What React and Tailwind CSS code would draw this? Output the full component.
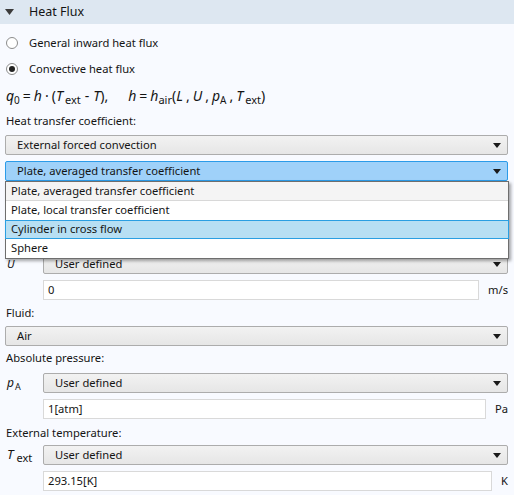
import React from "react";

const font = { fontFamily: '"Noto Sans", "Open Sans", sans-serif' };

function Arrow() {
	return (
		<svg width="8" height="5" viewBox="0 0 8 5" className="shrink-0">
			<path d="M0 0 H8 L4 5 Z" fill="#1a1a1a" />
		</svg>
	);
}

function Select({ value, active = false, className = "" }) {
	return (
		<div
			className={`h-[20px] flex items-center justify-between pl-[11px] pr-[6px] rounded-[2px] border ${
				active
					? "bg-[#9fd1f9] border-[#2b9be8]"
					: "bg-gradient-to-b from-[#f2f2f2] to-[#e6e6e6] border-[#acacac]"
			} ${className}`}
		>
			<span className="leading-none">{value}</span>
			<Arrow />
		</div>
	);
}

function Input({ value, unit, className = "" }) {
	return (
		<div className={`flex items-center gap-[9px] pl-[43px] ${className}`}>
			<div className="flex-1 h-[20px] bg-white border border-[#d9d9d9] flex items-center px-[4px]">
				{value}
			</div>
			<span>{unit}</span>
		</div>
	);
}

function Radio({ checked, label }) {
	return (
		<div className="flex items-center h-[26px] pl-[6px]">
			<div className="w-[12px] h-[12px] rounded-full border border-[#8c8c8c] bg-white flex items-center justify-center">
				{checked && <div className="w-[6px] h-[6px] rounded-full bg-[#222]" />}
			</div>
			<span className="ml-[11px]">{label}</span>
		</div>
	);
}

function Labeled({ label, children, className = "" }) {
	return (
		<div className={`flex items-center ${className}`}>
			<div className="w-[43px] pl-[7px] shrink-0 italic">{label}</div>
			<div className="flex-1">{children}</div>
		</div>
	);
}

function Label({ children, className = "" }) {
	return <div className={`h-[16px] leading-[16px] pl-[6px] ${className}`}>{children}</div>;
}

// subscript sitting a little under the baseline
function Sub({ children, className = "" }) {
	return <span className={`not-italic relative top-[3px] ${className}`}>{children}</span>;
}

const items = [
	"Plate, averaged transfer coefficient",
	"Plate, local transfer coefficient",
	"Cylinder in cross flow",
	"Sphere",
];

export default function App() {
	return (
		<div style={font} className="w-[514px] h-[495px] overflow-hidden bg-[#f8faff] text-[11.2px] text-[#141414]">
			<div className="h-[24px] bg-[#dde7f1] flex items-center pl-[5px]">
				<svg width="9" height="6" viewBox="0 0 9 6">
					<path d="M0 0 H9 L4.5 6 Z" fill="#3b3b3b" />
				</svg>
				<span className="ml-[15px] text-[12.5px]">Heat Flux</span>
			</div>

			<div className="pt-[6px]">
				<Radio label="General inward heat flux" />
				<Radio checked label="Convective heat flux" />
			</div>

			<div className="h-[28px] leading-[28px] pl-[6px] text-[14px] whitespace-nowrap">
				<i>q</i>
				<Sub className="text-[10px] top-[2px]">0</Sub>
				<span className="mx-[3px]">=</span>
				<i>h</i>
				<span className="mx-[3px]">·</span>
				<span>(</span>
				<i>T</i>
				<Sub className="text-[11px] ml-[2px]">ext</Sub>
				<span className="mx-[4px]">-</span>
				<i>T</i>
				<span>),</span>
				<i className="ml-[20px]">h</i>
				<span className="mx-[3px]">=</span>
				<i>h</i>
				<Sub className="text-[11px]">air</Sub>
				<span>(</span>
				<i>L</i>
				<span className="mx-[3px]">,</span>
				<i>U</i>
				<span className="mx-[3px]">,</span>
				<i>p</i>
				<Sub className="text-[10px] top-[2px]">A</Sub>
				<span className="mx-[3px]">,</span>
				<i>T</i>
				<Sub className="text-[11px] ml-[2px]">ext</Sub>
				<span>)</span>
			</div>

			<Label className="mt-[3px]">Heat transfer coefficient:</Label>

			<div className="pl-[5px] pr-[6px]">
				<Select className="mt-[6px]" value="External forced convection" />
				<div className="relative mt-[6px]">
					<Select active value="Plate, averaged transfer coefficient" />
					<div className="absolute left-0 right-[-1px] top-[20px] z-10 bg-white border border-[#6e6e6e] shadow-[2px_2px_3px_rgba(0,0,0,0.35)]">
						{items.map((it, i) => (
							<div
								key={it}
								className={`h-[19px] flex items-center pl-[5px] ${
									i === 0
										? "bg-[#f4f4f4] border-b border-[#d8d8d8]"
										: i === 2
										? "bg-[#b7dff3] border border-[#2a9fe2] -mx-[1px] px-[6px]"
										: ""
								}`}
							>
								{it}
							</div>
						))}
					</div>
				</div>
			</div>

			<div className="pr-[6px]">
				<Labeled label="U" className="mt-[73px]">
					<Select value="User defined" />
				</Labeled>
				<Input className="mt-[6px]" value="0" unit="m/s" />
			</div>

			<Label className="mt-[5px]">Fluid:</Label>
			<div className="pl-[5px] pr-[6px]">
				<Select className="mt-[5px]" value="Air" />
			</div>
			<Label className="mt-[4px]">Absolute pressure:</Label>

			<div className="pr-[6px]">
				<Labeled
					className="mt-[7px]"
					label={
						<span className="text-[12px]">
							p<Sub className="text-[9px] top-[2px] ml-[1px]">A</Sub>
						</span>
					}
				>
					<Select value="User defined" />
				</Labeled>
				<Input className="mt-[6px]" value="1[atm]" unit="Pa" />
			</div>

			<Label className="mt-[6px]">External temperature:</Label>

			<div className="pr-[6px]">
				<Labeled
					className="mt-[4px]"
					label={
						<span className="text-[13px]">
							T<Sub className="text-[11px] ml-[3px]">ext</Sub>
						</span>
					}
				>
					<Select value="User defined" />
				</Labeled>
				<Input className="mt-[6px]" value="293.15[K]" unit="K" />
			</div>
		</div>
	);
}
